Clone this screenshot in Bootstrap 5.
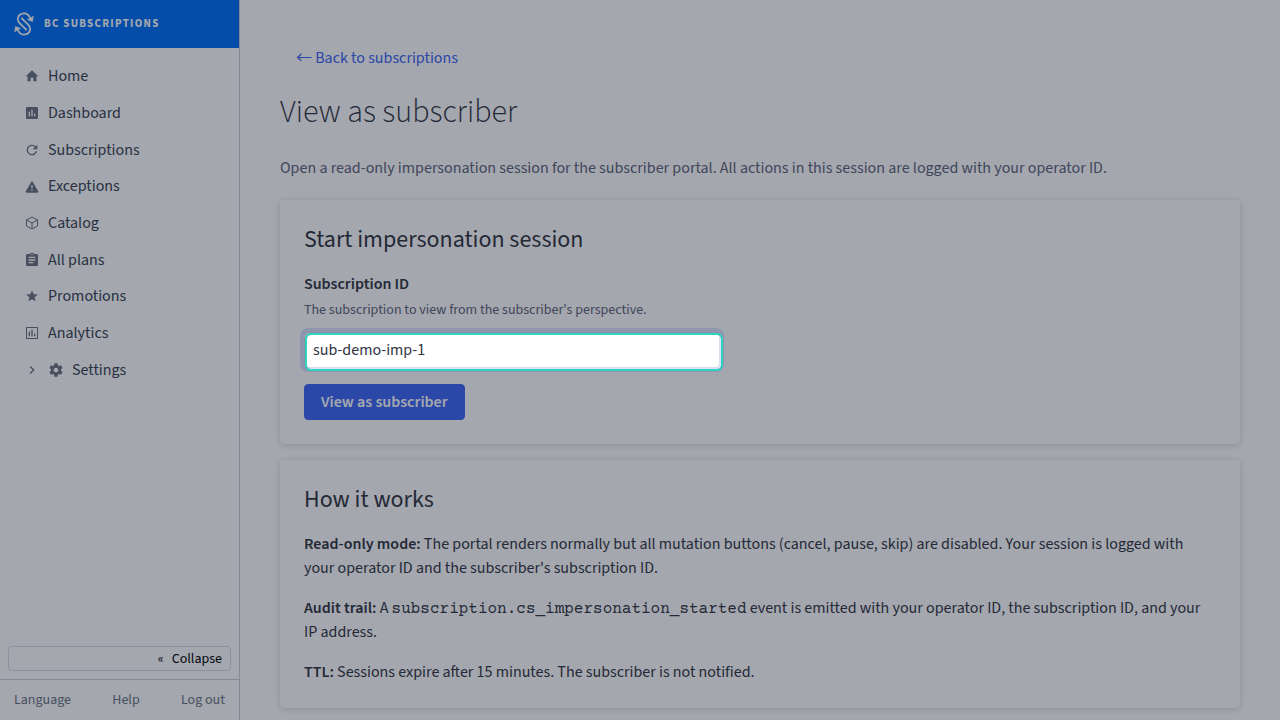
<!DOCTYPE html>
<html lang="en">
<head>
<meta charset="utf-8">
<meta name="viewport" content="width=device-width, initial-scale=1">
<title>View as subscriber</title>
<link href="https://cdn.jsdelivr.net/npm/bootstrap@5.3.0/dist/css/bootstrap.min.css" rel="stylesheet">
<style>
:root{--ink:#313440;--muted:#5e637a;--nav-ink:#374151;--nav-muted:#6b7280;--line:#d9dce9;--brand:#3c64f4}
body{font-family:"Source Sans Pro","Source Sans 3","Noto Sans CJK SC",sans-serif;font-size:16px;line-height:24px;color:var(--ink);overflow-x:hidden}
.side{width:240px;border-right:1px solid #cbcfdf;position:sticky;top:0}
.side-head{height:48px;background:#006ff7;color:#fff;font-size:11px;font-weight:700;letter-spacing:.12em;padding-left:12px;gap:8px}
.side-nav{display:grid;grid-auto-rows:1fr;height:330px;margin-top:10px}
.side-nav a{color:var(--nav-ink);padding-left:24px;gap:8px}
.side-nav svg{width:16px;height:16px;fill:var(--nav-muted)}
.collapse-btn{margin:8px;height:25px;font-size:14px;line-height:1;border:1px solid var(--line);border-radius:4px;background:#fff;color:#000;gap:8px;padding:0 8px}
.side-foot{border-top:1px solid #cbcfdf;height:41px;font-size:14px;padding:0 14px}
.side-foot a{color:var(--nav-muted)}
.page-body{padding:46px 40px 12px;min-width:0}
.back-link{color:var(--brand);margin-left:16px}
.back-arrow{font-family:"Noto Sans CJK SC",sans-serif;line-height:1}
h1{font-size:32px;font-weight:300;line-height:40px;margin:22px 0 24px}
h2{font-size:24px;font-weight:400;line-height:32px;margin:0 0 16px}
.intro{color:var(--muted);margin-bottom:20px}
.panel{padding:24px;border-radius:4px;box-shadow:0 1px 6px rgba(49,52,64,.2);margin-bottom:16px}
.panel p{margin-bottom:16px}
.panel p:last-child{margin-bottom:0}
.panel label,.panel strong{font-weight:600}
.hint{font-size:14px;color:var(--muted);line-height:20px;margin:4px 0 12px}
.field{max-width:416px;margin-bottom:16px}
.field .form-control{height:36px;font-size:16px;color:var(--ink);padding:0 8px;border:1px solid var(--line);border-radius:4px;box-shadow:0 0 0 4px #dbe3fe}
.spotlight{position:absolute;inset:3px -1px -1px 3px;border-radius:4px;box-shadow:0 0 0 2px #2dd4bf,0 0 0 4000px rgba(15,23,42,.38);pointer-events:none;z-index:5}
.btn-brand{background:var(--brand);color:#fff;font-size:16px;font-weight:600;line-height:24px;height:36px;padding:0 16px;border-radius:4px;border:1px solid var(--brand)}
code{font:16px/16px "Courier Prime","Courier 10 Pitch",FreeMono,"Liberation Mono",monospace;color:inherit}
</style>
</head>
<body>
<div class="d-flex">
<aside class="side vh-100 flex-shrink-0 d-flex flex-column">
  <div class="side-head d-flex align-items-center">
    <svg width="24" height="24" viewBox="0 0 24 24" fill="none" stroke="#fff" stroke-width="1.7" stroke-linecap="round" stroke-linejoin="round" aria-hidden="true">
      <path d="M18.300 6.500C17.200 3.300 14.900 1.400 12 1.400c-3.500 0-6.200 2.400-6.200 5.600 0 1.800.7 3.100 2 4.300l6.500 6.300"/>
      <path d="M5.700 17.500c1.100 3.200 3.400 5.100 6.300 5.100 3.500 0 6.200-2.400 6.200-5.600 0-1.800-.7-3.100-2-4.300L9.700 6.400"/>
      <path fill="#fff" stroke-width=".6" d="M21.300 4.600l-.8 4.800-4.800-1.700zM2.700 19.400l.8-4.800 4.800 1.700z"/>
    </svg>
    <span>BC SUBSCRIPTIONS</span>
  </div>
  <nav class="side-nav" aria-label="Main">
    <a href="#" class="d-flex align-items-center text-decoration-none"><svg viewBox="0 0 24 24"><path d="M10 20v-5.500h4V20h4.700v-7.500H21.500L12 3.500 2.500 12.500h2.800V20z"/></svg>Home</a>
    <a href="#" class="d-flex align-items-center text-decoration-none"><svg viewBox="0 0 24 24"><path d="M19 3H5c-1.100 0-2 .9-2 2v14c0 1.100.9 2 2 2h14c1.100 0 2-.9 2-2V5c0-1.100-.9-2-2-2zM9 17H7v-7h2zm4 0h-2V7h2zm4 0h-2v-4h2z"/></svg>Dashboard</a>
    <a href="#" class="d-flex align-items-center text-decoration-none"><svg viewBox="0 0 24 24"><path d="M17.650 6.350A7.960 7.960 0 0 0 12 4a8 8 0 1 0 7.730 10h-2.080A6 6 0 1 1 12 6c1.660 0 3.140.69 4.220 1.780L13 11h7V4z"/></svg>Subscriptions</a>
    <a href="#" class="d-flex align-items-center text-decoration-none"><svg viewBox="0 0 24 24"><path fill-rule="evenodd" d="M4 22h16c1.300 0 1.900-1 1.300-2.100L13.200 6c-.6-1-1.800-1-2.400 0L2.700 19.900C2.100 21 2.700 22 4 22zM13 19h-2v-2h2zm0-4h-2v-4h2z"/></svg>Exceptions</a>
    <a href="#" class="d-flex align-items-center text-decoration-none"><svg viewBox="0 0 24 24"><path fill="none" stroke="#6b7280" stroke-width="1.500" stroke-linejoin="round" d="M12 3l8.300 4.500v9L12 21l-8.300-4.500v-9zM3.700 7.500L12 12l8.300-4.500M12 12v9"/></svg>Catalog</a>
    <a href="#" class="d-flex align-items-center text-decoration-none"><svg viewBox="0 0 24 24"><path d="M19 3h-4.180a3 3 0 0 0-5.640 0H5c-1.100 0-2 .9-2 2v14c0 1.100.9 2 2 2h14c1.100 0 2-.9 2-2V5c0-1.100-.9-2-2-2zm-7 0a1 1 0 1 1 0 2 1 1 0 0 1 0-2zm2 14H7v-2h7zm3-4H7v-2h10zm0-4H7V7h10z"/></svg>All plans</a>
    <a href="#" class="d-flex align-items-center text-decoration-none"><svg viewBox="0 0 24 24"><path d="M12 16.700L17.400 20l-1.400-6.200 4.700-4.100-6.300-.5L12 3.300 9.600 9.200l-6.300.5L8 13.800 6.600 20z"/></svg>Promotions</a>
    <a href="#" class="d-flex align-items-center text-decoration-none"><svg viewBox="0 0 24 24"><path d="M9 17H7v-7h2zm4 0h-2V7h2zm4 0h-2v-4h2zm2.500 2.500h-15v-15h15zM19.500 3h-15C3.600 3 3 3.600 3 4.500v15c0 .9.600 1.500 1.500 1.500h15c.9 0 1.500-.6 1.500-1.500v-15c0-.9-.6-1.500-1.500-1.500z"/></svg>Analytics</a>
    <a href="#" class="d-flex align-items-center text-decoration-none"><svg viewBox="0 0 24 24"><path d="M8.600 16.600L13.200 12 8.600 7.400 10 6l6 6-6 6z"/></svg><svg viewBox="0 0 24 24"><path d="M19.430 12.980c.04-.32.07-.64.07-.98s-.03-.66-.07-.98l2.110-1.650c.19-.15.24-.42.12-.64l-2-3.460c-.12-.22-.39-.3-.61-.22l-2.490 1c-.52-.4-1.080-.73-1.690-.98l-.38-2.650C14.460 2.180 14.250 2 14 2h-4c-.25 0-.46.18-.49.42l-.38 2.650c-.61.25-1.170.59-1.690.98l-2.490-1c-.23-.09-.49 0-.61.22l-2 3.460c-.13.22-.07.49.12.64l2.110 1.650c-.04.32-.07.65-.07.98s.03.66.07.98l-2.110 1.650c-.19.15-.24.42-.12.64l2 3.460c.12.22.39.3.61.22l2.490-1c.52.4 1.080.73 1.690.98l.38 2.650c.03.24.24.42.49.42h4c.25 0 .46-.18.49-.42l.38-2.650c.61-.25 1.170-.59 1.690-.98l2.490 1c.23.09.49 0 .61-.22l2-3.460c.12-.22.07-.49-.12-.64zM12 15.500c-1.930 0-3.500-1.570-3.500-3.500s1.570-3.500 3.500-3.500 3.500 1.570 3.500 3.500-1.570 3.500-3.500 3.500z"/></svg>Settings</a>
  </nav>
  <button type="button" class="collapse-btn mt-auto d-flex align-items-center justify-content-end"><span aria-hidden="true">«</span><span>Collapse</span></button>
  <div class="side-foot d-flex align-items-center justify-content-between">
    <a href="#" class="text-decoration-none">Language</a>
    <a href="#" class="text-decoration-none">Help</a>
    <a href="#" class="text-decoration-none">Log out</a>
  </div>
</aside>
<main class="page-body flex-grow-1">
  <a href="#" class="back-link text-decoration-none"><span class="back-arrow">←</span> Back to subscriptions</a>
  <h1>View as subscriber</h1>
  <p class="intro">Open a read-only impersonation session for the subscriber portal. All actions in this session are logged with your operator ID.</p>
  <section class="panel">
    <h2>Start impersonation session</h2>
    <label for="subscription-id" class="d-block">Subscription ID</label>
    <div class="hint" id="subscription-hint">The subscription to view from the subscriber's perspective.</div>
    <div class="field position-relative">
      <input type="text" class="form-control" id="subscription-id" aria-describedby="subscription-hint" value="sub-demo-imp-1">
      <div class="spotlight"></div>
    </div>
    <button type="button" class="btn btn-brand">View as subscriber</button>
  </section>
  <section class="panel mb-0">
    <h2>How it works</h2>
    <p><strong>Read-only mode:</strong> The portal renders normally but all mutation buttons (cancel, pause, skip) are disabled. Your session is logged with your operator ID and the subscriber's subscription ID.</p>
    <p><strong>Audit trail:</strong> A <code>subscription.cs_impersonation_started</code> event is emitted with your operator ID, the subscription ID, and your IP address.</p>
    <p><strong>TTL:</strong> Sessions expire after 15 minutes. The subscriber is not notified.</p>
  </section>
</main>
</div>
<script src="https://cdn.jsdelivr.net/npm/bootstrap@5.3.0/dist/js/bootstrap.bundle.min.js"></script>
</body>
</html>
